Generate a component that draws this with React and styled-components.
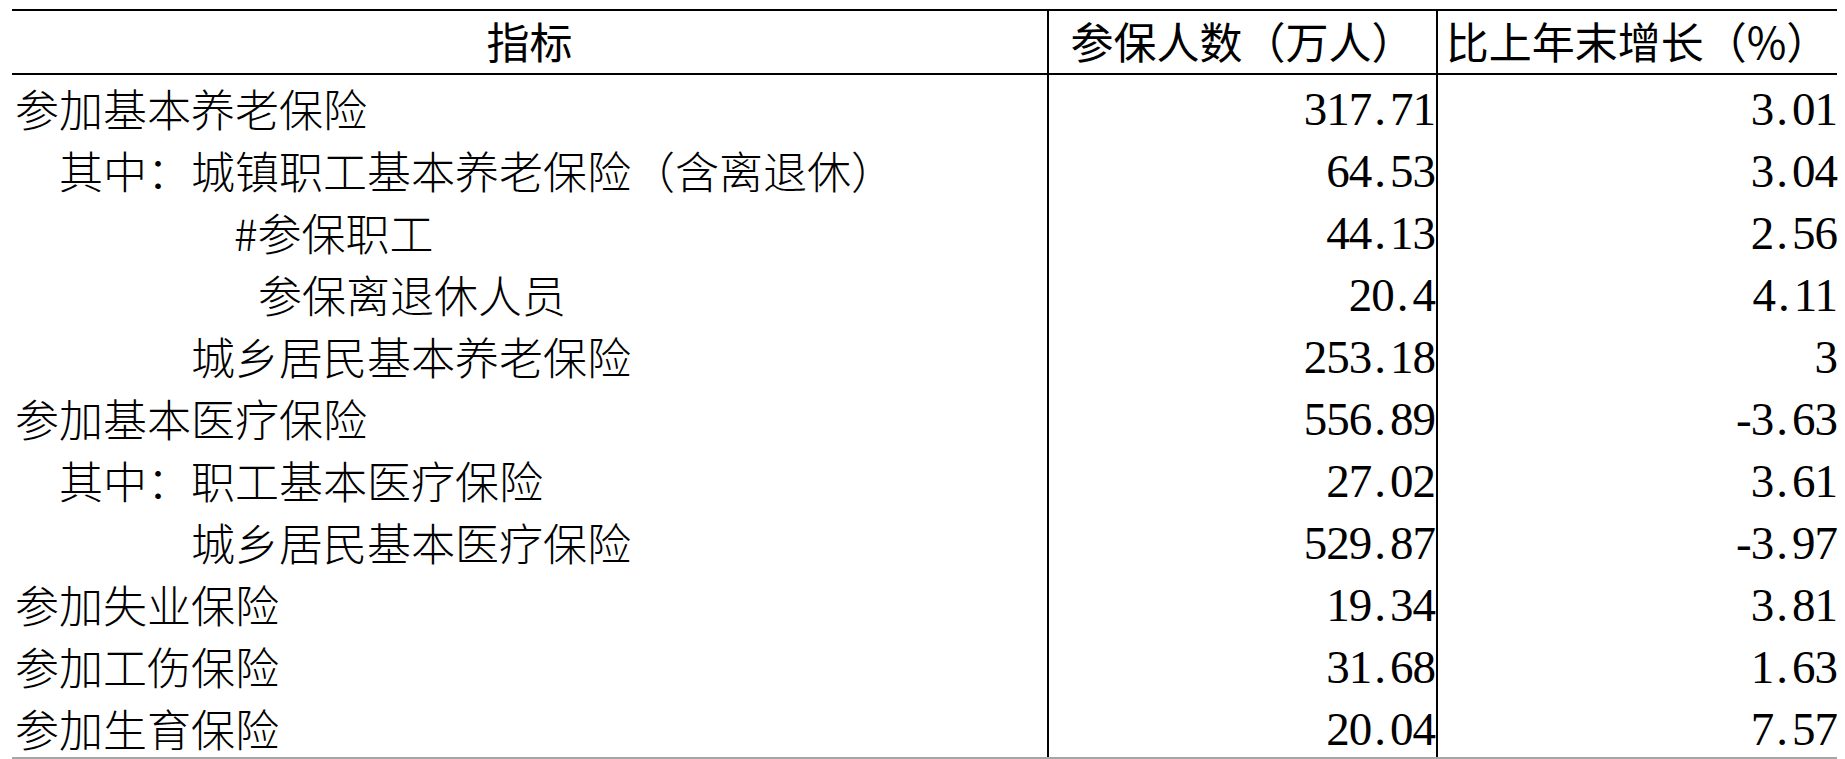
import React from "react";
import styled, { createGlobalStyle } from "styled-components";

const GlobalStyle = createGlobalStyle`
  body {
    margin: 0;
    background: #fff;
    color: #000;
  }
`;

// the whole table, top rule black, bottom rule grey
const Table = styled.div`
  margin: 9px 0 0 12px;
  width: 1825px;
  border-top: 2px solid #000;
  border-bottom: 2px solid #a6a6a6;
`;

const Row = styled.div`
  display: grid;
  grid-template-columns: 1035px 389px 401px;
  height: 62px;
`;

const HeadRow = styled(Row)`
  border-bottom: 2px solid #000;
`;

const Cell = styled.div`
  box-sizing: border-box;
  border-left: ${(p) => (p.$rule ? "2px solid #000" : "none")};
  white-space: nowrap;
`;

// header cells, centred, heavier sans
const HeadCell = styled(Cell)`
  font-family: "Noto Sans CJK SC", sans-serif;
  font-size: 43px;
  font-weight: 400;
  line-height: 58px;
  padding-bottom: 4px;
  text-align: center;
`;

// first column label, indented by level
const Label = styled(Cell)`
  font-family: "Noto Sans CJK SC", sans-serif;
  font-size: 44px;
  font-weight: 300;
  line-height: 57px;
  padding-top: 5px;
  padding-left: ${(p) => 3 + p.$indent}px;
`;

// numeric cells
const Num = styled(Cell)`
  font-family: "Liberation Serif", serif;
  font-size: 47px;
  letter-spacing: -1px;
  line-height: 55px;
  padding-top: 7px;
  padding-right: ${(p) => p.$pad}px;
  text-align: right;
`;

const Dot = styled.span`
  letter-spacing: 4px;
  margin-left: 3px;
`;

const rows = [
  { label: "参加基本养老保险", indent: 0, count: "317.71", growth: "3.01" },
  { label: "其中：城镇职工基本养老保险（含离退休）", indent: 44, count: "64.53", growth: "3.04" },
  { label: "#参保职工", indent: 219, count: "44.13", growth: "2.56" },
  { label: "参保离退休人员", indent: 243, count: "20.4", growth: "4.11" },
  { label: "城乡居民基本养老保险", indent: 176, count: "253.18", growth: "3" },
  { label: "参加基本医疗保险", indent: 0, count: "556.89", growth: "-3.63" },
  { label: "其中：职工基本医疗保险", indent: 44, count: "27.02", growth: "3.61" },
  { label: "城乡居民基本医疗保险", indent: 176, count: "529.87", growth: "-3.97" },
  { label: "参加失业保险", indent: 0, count: "19.34", growth: "3.81" },
  { label: "参加工伤保险", indent: 0, count: "31.68", growth: "1.63" },
  { label: "参加生育保险", indent: 0, count: "20.04", growth: "7.57" },
];

function Value({ text }) {
  const [whole, frac] = text.split(".");
  if (frac === undefined) return whole;
  return (
    <>
      {whole}
      <Dot>.</Dot>
      {frac}
    </>
  );
}

export default function App() {
  return (
    <>
      <GlobalStyle />
      <Table>
        <HeadRow>
          <HeadCell>指标</HeadCell>
          <HeadCell $rule>参保人数（万人）</HeadCell>
          <HeadCell $rule>比上年末增长（%）</HeadCell>
        </HeadRow>
        {rows.map((r) => (
          <Row key={r.label}>
            <Label $indent={r.indent}>{r.label}</Label>
            <Num $rule $pad={1}>
              <Value text={r.count} />
            </Num>
            <Num $rule $pad={0}>
              <Value text={r.growth} />
            </Num>
          </Row>
        ))}
      </Table>
    </>
  );
}
